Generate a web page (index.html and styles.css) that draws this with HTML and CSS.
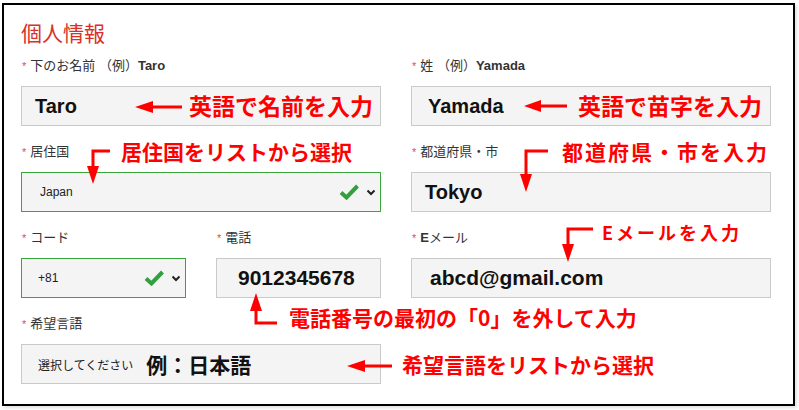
FILE: index.html
```html
<!DOCTYPE html>
<html lang="ja">
<head>
<meta charset="utf-8">
<title>個人情報</title>
<link rel="stylesheet" href="styles.css">
</head>
<body>
<div class="frame">
  <h2 class="title">個人情報</h2>
  <div class="grid">
    <div class="field">
      <div class="label"><span class="req">*</span>下のお名前 （例）<b>Taro</b></div>
      <div class="input pad-13"><span class="value">Taro</span></div>
    </div>
    <div class="field">
      <div class="label"><span class="req">*</span>姓 （例）<b>Yamada</b></div>
      <div class="input pad-16"><span class="value">Yamada</span></div>
    </div>
    <div class="field">
      <div class="label"><span class="req">*</span>居住国</div>
      <div class="input select pad-18">
        <span class="opt">Japan</span>
        <span class="icons">
          <svg class="check" width="20" height="16" viewBox="0 0 20 16"><polyline points="2,8.5 7.5,13.5 18.5,2" fill="none" stroke="#33a03f" stroke-width="4"/></svg>
          <svg class="chev" width="10" height="7" viewBox="0 0 10 7"><polyline points="1.5,1.5 5,5 8.5,1.5" fill="none" stroke="#222" stroke-width="2"/></svg>
        </span>
      </div>
    </div>
    <div class="field">
      <div class="label"><span class="req">*</span>都道府県・市</div>
      <div class="input pad-13"><span class="value">Tokyo</span></div>
    </div>
    <div class="pair">
      <div class="field">
        <div class="label"><span class="req">*</span>コード</div>
        <div class="input select pad-16">
          <span class="opt">+81</span>
          <span class="icons">
            <svg class="check" width="20" height="16" viewBox="0 0 20 16"><polyline points="2,8.5 7.5,13.5 18.5,2" fill="none" stroke="#33a03f" stroke-width="4"/></svg>
            <svg class="chev" width="10" height="7" viewBox="0 0 10 7"><polyline points="1.5,1.5 5,5 8.5,1.5" fill="none" stroke="#222" stroke-width="2"/></svg>
          </span>
        </div>
      </div>
      <div class="field">
        <div class="label"><span class="req">*</span>電話</div>
        <div class="input pad-21"><span class="value big">9012345678</span></div>
      </div>
    </div>
    <div class="field">
      <div class="label"><span class="req">*</span><b>E</b>メール</div>
      <div class="input pad-18"><span class="value big">abcd@gmail.com</span></div>
    </div>
    <div class="field">
      <div class="label"><span class="req">*</span>希望言語</div>
      <div class="input pad-16">
        <span class="placeholder">選択してください</span>
        <span class="example">例：日本語</span>
      </div>
    </div>
  </div>
</div>

<div class="notes">
  <svg class="arrows" width="799" height="410" viewBox="0 0 799 410">
    <g fill="none" stroke="#ff0000" stroke-width="3">
      <line x1="182" y1="107" x2="150" y2="107"/>
      <line x1="567" y1="106" x2="538" y2="106"/>
      <polyline points="110,151 93,151 93,169"/>
      <polyline points="548,151 526,151 526,177"/>
      <polyline points="593,229 568,229 568,246"/>
      <polyline points="277,323 256,323 256,308"/>
      <line x1="392" y1="366" x2="362" y2="366"/>
    </g>
    <g fill="#ff0000">
      <polygon points="135,107 153,101 153,113"/>
      <polygon points="524,106 541,100 541,112"/>
      <polygon points="93,184 87,166 99,166"/>
      <polygon points="526,192 520,174 532,174"/>
      <polygon points="568,262 562,244 574,244"/>
      <polygon points="256,293 250,311 262,311"/>
      <polygon points="347,366 365,360 365,372"/>
    </g>
  </svg>
  <span class="note n-name">英語で名前を入力</span>
  <span class="note n-sei">英語で苗字を入力</span>
  <span class="note n-country">居住国をリストから選択</span>
  <span class="note n-pref">都道府県・市を入力</span>
  <span class="note n-email">Eメールを入力</span>
  <span class="note n-phone">電話番号の最初の「0」を外して入力</span>
  <span class="note n-lang">希望言語をリストから選択</span>
</div>
</body>
</html>
```

FILE: styles.css
```css
html, body {
  margin: 0;
  padding: 0;
  background: #ffffff;
}

body {
  position: relative;
  width: 799px;
  height: 410px;
  overflow: hidden;
  padding: 3px 0 0 2px;
  box-sizing: border-box;
  font-family: "Liberation Sans", "Noto Sans CJK JP", sans-serif;
}

.frame {
  box-sizing: border-box;
  width: 793px;
  height: 403px;
  border: 2px solid #000;
  padding: 13px 0 0 17px;
  background: #fff;
  box-shadow: 2px 2px 3px rgba(0, 0, 0, 0.12);
}

.title {
  margin: 0 0 10px 0;
  font-family: "Noto Sans CJK JP", sans-serif;
  font-weight: normal;
  font-size: 21px;
  line-height: 28px;
  color: #d9302a;
}

.grid {
  display: grid;
  grid-template-columns: 360px 360px;
  column-gap: 30px;
  row-gap: 16px;
  align-items: start;
}

.pair {
  display: grid;
  grid-template-columns: 165px 165px;
  column-gap: 30px;
}

.field {
  display: flex;
  flex-direction: column;
}

.label {
  height: 20px;
  line-height: 20px;
  margin-bottom: 10px;
  font-family: "Liberation Sans", "Noto Sans CJK JP", sans-serif;
  font-size: 13px;
  color: #333;
  white-space: nowrap;
}

.label b {
  font-weight: bold;
}

.req {
  color: #e0503a;
  font-size: 11px;
  margin: 0 4px 0 1px;
}

.input {
  box-sizing: border-box;
  height: 40px;
  border: 1px solid #cacaca;
  background: #f4f4f4;
  display: flex;
  align-items: center;
}

.select {
  border-color: #3aa63a;
  padding-right: 4px;
}

.pad-13 { padding-left: 13px; }
.pad-16 { padding-left: 16px; }
.pad-18 { padding-left: 18px; }
.pad-21 { padding-left: 21px; }

.value {
  font-family: "Liberation Sans", sans-serif;
  font-weight: bold;
  font-size: 20px;
  color: #111;
}

.value.big {
  font-size: 21px;
}

.opt {
  font-family: "Liberation Sans", sans-serif;
  font-size: 12px;
  color: #222;
}

.icons {
  margin-left: auto;
  display: flex;
  align-items: center;
  gap: 7px;
}

.check {
  display: block;
}

.chev {
  display: block;
  margin-top: 1px;
}

.placeholder {
  font-family: "Noto Sans CJK JP", sans-serif;
  font-size: 12px;
  color: #222;
}

.example {
  margin-left: 13px;
  font-family: "Noto Sans CJK JP", sans-serif;
  font-weight: bold;
  font-size: 21px;
  color: #111;
}

.notes {
  position: absolute;
  left: 0;
  top: 0;
  width: 799px;
  height: 410px;
  pointer-events: none;
}

.arrows {
  position: absolute;
  left: 0;
  top: 0;
}

.note {
  position: absolute;
  font-family: "Noto Sans CJK JP", sans-serif;
  font-weight: bold;
  color: #ff0000;
  line-height: 1;
  white-space: nowrap;
  font-size: 21px;
}

.n-name { left: 189px; top: 94px; font-size: 23px; }
.n-sei { left: 578px; top: 94px; font-size: 23px; }
.n-country { left: 121px; top: 141px; }
.n-pref { left: 562px; top: 141px; letter-spacing: 2px; }
.n-email { left: 602px; top: 223px; font-size: 18px; letter-spacing: 3px; }
.n-phone { left: 289px; top: 307px; }
.n-lang { left: 402px; top: 354px; }
```
